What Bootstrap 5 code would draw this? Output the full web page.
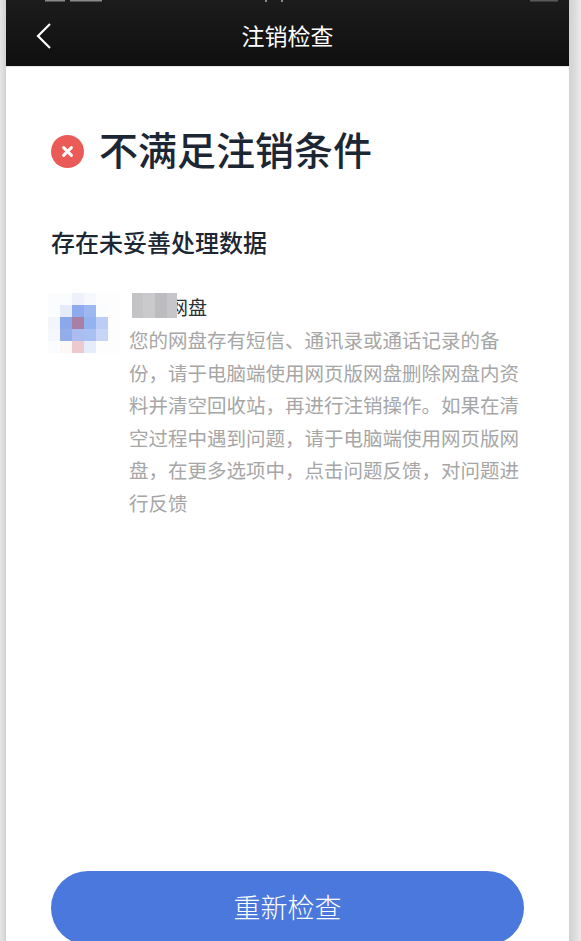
<!DOCTYPE html>
<html lang="zh">
<head>
<meta charset="utf-8">
<link rel="stylesheet" href="https://cdn.jsdelivr.net/npm/bootstrap@5.3.0/dist/css/bootstrap.min.css">
<style>
html,body{height:100%;overflow:hidden}
body{background:linear-gradient(90deg,#e6e6e6 0,#d2d2d2 6px,#d2d2d2 569px,#dcdcdc 575px,#ececec 581px);font-family:"Noto Sans CJK SC","Liberation Sans",sans-serif}
.phone{width:563px;height:941px;margin-left:6px;background:#fff;overflow:hidden}
.topbar{height:67px;background:linear-gradient(#1c1c1c,#0f0f0f);border-bottom:1px solid #e4e4e4;color:#fff}
.back{position:absolute;left:30px;top:22px}
.remnant{position:absolute;left:0;top:0;width:563px;height:4px}
.toptitle{font-size:23px;line-height:1;margin-top:5px}
.main{padding:0 45px}
.head-row{margin-top:58px;gap:15px}
.fail{width:33px;height:33px;flex:none}
.head-text{font-size:39px;line-height:46px;font-weight:500;color:#1c2733;margin-bottom:7px}
.sub{font-size:24px;line-height:32px;font-weight:500;color:#1c2733;margin-top:48px}
.item{margin-top:35px;margin-left:-3px;gap:9px}
.mosaic{width:72px;height:64px;flex:none;filter:blur(.6px)}
.item-name{font-size:19px;line-height:28px;color:#2b2f36;position:relative;padding-left:37px;margin-left:3px}
.blurbox{position:absolute;left:0;top:0;width:45px;height:25px;filter:blur(.5px)}
.item-desc{font-size:19.5px;line-height:32.6px;color:#a6a6a6;width:392px;margin-top:3px}
.retry{width:473px;height:74px;background:#4a78dc;border:0;border-radius:37px;color:#fff;font-size:27px;font-weight:300;padding:0 0 2px}
.foot{position:absolute;left:45px;top:871px}
</style>
</head>
<body>
<div class="phone position-relative">
  <div class="topbar d-flex align-items-center justify-content-center position-relative">
    <svg class="remnant" viewBox="0 0 563 4"><g fill="#8a8a8a"><rect x="39" y="0" width="20" height="1.5"/><rect x="64" y="0" width="32" height="1.5"/><rect x="259" y="0" width="2" height="2"/><rect x="275" y="0" width="2" height="2"/></g><rect x="524" y="0" width="28" height="1.5" fill="#5a5a5a"/></svg>
    <svg class="back" width="16" height="28" viewBox="0 0 16 28"><path d="M14 2 L2 14 L14 26" fill="none" stroke="#fff" stroke-width="2.2"/></svg>
    <div class="toptitle">注销检查</div>
  </div>
  <div class="main">
    <div class="head-row d-flex align-items-center">
      <svg class="fail" viewBox="0 0 33 33"><circle cx="16.5" cy="16.5" r="16.5" fill="#ea5a57"/><path d="M12.6 12.6 L20.4 20.4 M20.4 12.6 L12.6 20.4" stroke="#fff" stroke-width="3" stroke-linecap="round"/></svg>
      <div class="head-text">不满足注销条件</div>
    </div>
    <div class="sub">存在未妥善处理数据</div>
    <div class="item d-flex">
      <svg class="mosaic" viewBox="0 0 72 64">
        <g shape-rendering="crispEdges">
        <rect x="0" y="0" width="72" height="60" fill="#fbfcfe"/>
        <rect x="48" y="0" width="24" height="60" fill="#fdfdfe"/>
        <rect x="24" y="0" width="12" height="12" fill="#eef1fb"/><rect x="36" y="0" width="12" height="12" fill="#f6f8fd"/>
        <rect x="12" y="12" width="12" height="12" fill="#e6ebfa"/><rect x="24" y="12" width="12" height="12" fill="#8fabee"/><rect x="36" y="12" width="12" height="12" fill="#9db7f0"/><rect x="48" y="12" width="12" height="12" fill="#fbfcfe"/>
        <rect x="0" y="24" width="12" height="12" fill="#f3f5fc"/><rect x="12" y="24" width="12" height="12" fill="#8ba8ec"/><rect x="24" y="24" width="12" height="12" fill="#aa7fa6"/><rect x="36" y="24" width="12" height="12" fill="#92b2f0"/><rect x="48" y="24" width="12" height="12" fill="#bccdf5"/>
        <rect x="0" y="36" width="12" height="12" fill="#f5f7fc"/><rect x="12" y="36" width="12" height="12" fill="#92ade9"/><rect x="24" y="36" width="12" height="12" fill="#abbdf0"/><rect x="36" y="36" width="12" height="12" fill="#a9c0f2"/><rect x="48" y="36" width="12" height="12" fill="#c7d5f6"/>
        <rect x="12" y="48" width="12" height="12" fill="#fcf8f6"/><rect x="24" y="48" width="12" height="12" fill="#ecc9cd"/><rect x="36" y="48" width="12" height="12" fill="#e6ecf9"/>
        </g>
      </svg>
      <div>
        <div class="item-name">
          网盘
          <svg class="blurbox" viewBox="0 0 45 25"><g shape-rendering="crispEdges"><rect width="11" height="25" fill="#c4c4c7"/><rect x="11" width="12" height="25" fill="#cacacc"/><rect x="23" width="12" height="25" fill="#bcbcc0"/><rect x="35" width="10" height="25" fill="#c6c6c9"/></g></svg>
        </div>
        <div class="item-desc">您的网盘存有短信、通讯录或通话记录的备份，请于电脑端使用网页版网盘删除网盘内资料并清空回收站，再进行注销操作。如果在清空过程中遇到问题，请于电脑端使用网页版网盘，在更多选项中，点击问题反馈，对问题进行反馈</div>
      </div>
    </div>
  </div>
  <button class="btn retry foot" type="button">重新检查</button>
</div>
</body>
</html>
